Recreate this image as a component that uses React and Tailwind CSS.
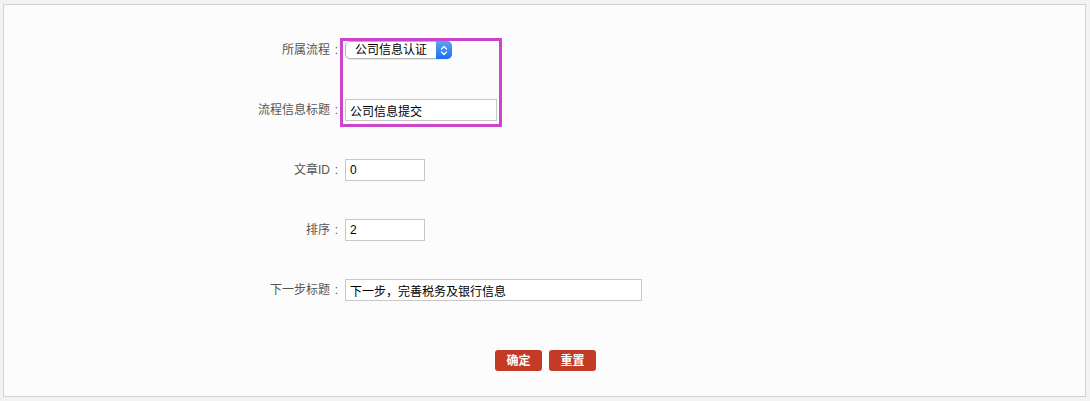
import React from 'react'

const font = { fontFamily: '"Liberation Sans", "Noto Sans CJK SC", sans-serif' }

const Row = ({ label, children }) => (
    <div className="flex h-[60px] items-center">
        <div className="w-[339px] shrink-0 text-right text-[12px] text-[#555]">
            {label}
            <span className="inline-block w-[13px] text-center">:</span>
        </div>
        <div className="ml-[2px] flex items-center">{children}</div>
    </div>
)

const TextBox = ({ value, width }) => (
    <input
        readOnly
        value={value}
        className={`${width} h-[22px] border border-[#c8c8c8] bg-white px-[4px] text-[12px] text-black outline-none`}
        style={font}
    />
)

const App = () => {
    return (
        <div lang="zh-CN" className="h-[401px] w-[1090px] bg-[#f3f3f3] pl-[3px] pr-[4px] pt-[4px]" style={font}>
            <div className="relative h-[393px] border border-[#d2d2d2] bg-[#fcfcfc] pt-[15px]">
                {/* annotation box */}
                <div className="pointer-events-none absolute left-[336px] top-[33px] h-[89px] w-[162px] border-[3px] border-[#cc44cc]"></div>

                <Row label="所属流程">
                    <div className="flex h-[18px] w-[107px] items-center rounded-[5px] border border-[#b4b4b4] bg-white shadow-[0_1px_1px_rgba(0,0,0,0.08)]">
                        <span className="flex-1 pl-[9px] text-[12px] leading-none text-black">公司信息认证</span>
                        <span className="flex h-[18px] w-[16px] items-center justify-center rounded-r-[5px] bg-gradient-to-b from-[#5aa2f8] to-[#1c6ef0] -mr-px -my-px">
                            <svg width="8" height="11" viewBox="0 0 8 11" fill="none" stroke="white" strokeWidth="1.3" strokeLinecap="round" strokeLinejoin="round">
                                <path d="M1.5 4 L4 1.5 L6.5 4" />
                                <path d="M1.5 7 L4 9.5 L6.5 7" />
                            </svg>
                        </span>
                    </div>
                </Row>

                <Row label="流程信息标题">
                    <TextBox value="公司信息提交" width="w-[152px]" />
                </Row>

                <Row label="文章ID">
                    <TextBox value="0" width="w-[80px]" />
                </Row>

                <Row label="排序">
                    <TextBox value="2" width="w-[80px]" />
                </Row>

                <Row label="下一步标题">
                    <TextBox value="下一步，完善税务及银行信息" width="w-[297px]" />
                </Row>

                <div className="mt-[30px] flex justify-center gap-[7px] pl-[2px]">
                    <button className="h-[21px] w-[47px] rounded-[3px] bg-[#c33a26] text-[12px] font-bold text-white">确定</button>
                    <button className="h-[21px] w-[47px] rounded-[3px] bg-[#c33a26] text-[12px] font-bold text-white">重置</button>
                </div>
            </div>
        </div>
    )
}

export default App
